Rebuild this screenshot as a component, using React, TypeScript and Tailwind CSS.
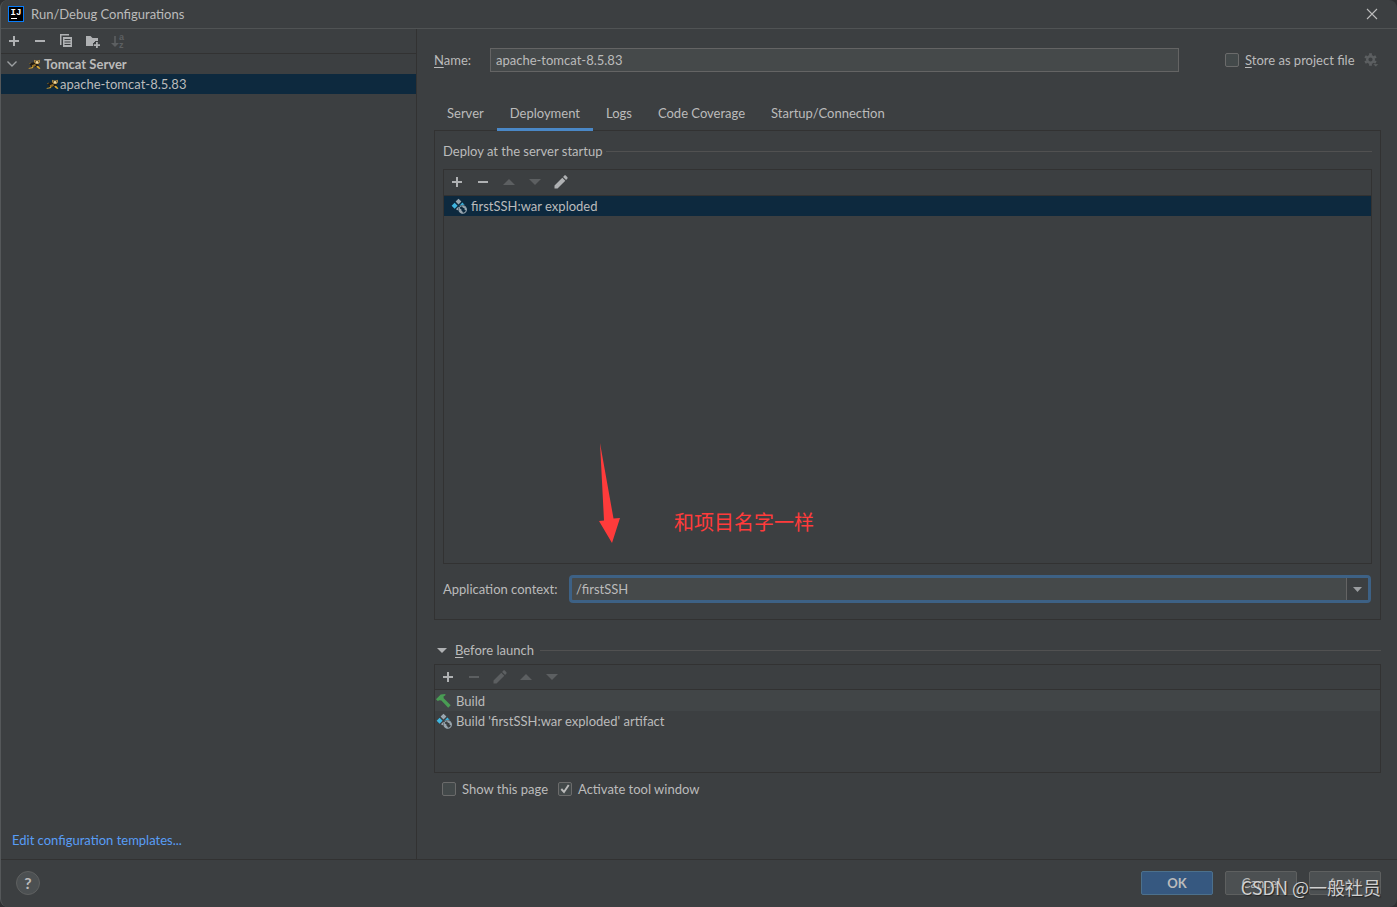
import React, { useState } from "react";

const iconBase = "size-4 shrink-0";

function PlusIcon() {
  return (
    <svg className={iconBase} viewBox="0 0 16 16" fill="currentColor">
      <path d="M3 7h4V3h2v4h4v2H9v4H7V9H3z" />
    </svg>
  );
}

function MinusIcon() {
  return (
    <svg className={iconBase} viewBox="0 0 16 16" fill="currentColor">
      <path d="M3 7h10v2H3z" />
    </svg>
  );
}

function CopyIcon() {
  return (
    <svg className={iconBase} viewBox="0 0 16 16" fill="currentColor">
      <path d="M2 1h9v1.5H3.5V12H2z" />
      <path fillRule="evenodd" d="M5 4h9v10H5zM6.5 6v1h6V6zM6.500 8.500v1h6v-1zM6.500 11v1h6v-1z" />
    </svg>
  );
}

function NewFolderIcon() {
  return (
    <svg className={iconBase} viewBox="0 0 16 16" fill="currentColor">
      <path d="M2 3h4.500l2 2H14v4h-4v3H9v1H2z" />
      <path d="M11 8h4v2h2v4h-2v2h-4v-2H9v-4h2z" fill="#3c3f41" />
      <path d="M12 9h1.800v2.200H16V13h-2.200v2H12v-2h-2.200v-1.800H12z" />
    </svg>
  );
}

function SortIcon() {
  return (
    <svg className={iconBase} viewBox="0 0 16 16" fill="currentColor">
      <path d="M4.200 3h1.600v7H9l-4 4-4-4h3.200z" />
      <text x="9" y="7" fontSize="9" fontFamily="Liberation Sans, sans-serif" fontWeight="700">a</text>
      <text x="9" y="14.500" fontSize="9" fontFamily="Liberation Sans, sans-serif" fontWeight="700">z</text>
    </svg>
  );
}

function UpIcon() {
  return (
    <svg className={iconBase} viewBox="0 0 16 16" fill="currentColor">
      <path d="M8 5l6 6H2z" />
    </svg>
  );
}

function DownIcon() {
  return (
    <svg className={iconBase} viewBox="0 0 16 16" fill="currentColor">
      <path d="M2 5h12l-6 6z" />
    </svg>
  );
}

function PencilIcon() {
  return (
    <svg className={iconBase} viewBox="0 0 16 16" fill="currentColor">
      <path d="M1.500 14.500V11.500L9.300 3.700l3 3L4.500 14.500zM10.100 2.900l1.300-1.300c.4-.4 1-.4 1.400 0l1.600 1.600c.4.4.4 1 0 1.400l-1.300 1.300z" />
    </svg>
  );
}

function TomcatIcon() {
  return (
    <svg className={iconBase} viewBox="-2 -1 18 18">
      <path d="M1.500 7.500l5-1.500L12.500 9 11.500 11.500 4.500 11.700 3 9.500z" fill="#1f1b15" />
      <path d="M4.500 9.500L8 8l1.500 1-1.500 1.700-3 .4z" fill="#94702a" />
      <path d="M1 12.400l3-.5 1.500-1.300 1.200.5-1.400 1.700-4.300.6zM9.500 10.600l2-.6 1.800 1.800 1 1.400-1.500.3-2.300-1.500z" fill="#d9a62f" />
      <path d="M7 3.300l1.500.7h3L13.500 3.200l.2 2.800-1.700 2H9L7.200 6z" fill="#bd9342" />
      <path d="M9 4.800h2.800l.6 1.500-1.900 1.400L9 6.500z" fill="#ecd9a8" />
      <path d="M8.400 5h.9v.9h-.9zM11.500 5h.9v.9h-.9z" fill="#2a2419" />
      <path d="M1.500 7.700l2-.8" stroke="#80652c" strokeWidth=".9" />
    </svg>
  );
}

function ArtifactIcon() {
  return (
    <svg className={iconBase} viewBox="0 0 16 16">
      <path d="M7.500.7l2.900 2.900-2.900 2.900-2.900-2.900z" fill="#9aa7b0" />
      <path d="M3.600 4.700l3 3-3 3-3-3z" fill="#40b6e0" />
      <path d="M11.400 4.600l2.300 2.300c-2-.4-3.700 0-5 1.200l-.3-.4z" fill="#40b6e0" />
      <path d="M7.400 8.700l.5.500c-.7 1-.9 2.200-.6 3.400L4.900 11.200z" fill="#9aa7b0" />
      <circle cx="11.700" cy="11.500" r="3.700" fill="none" stroke="#9aa7b0" strokeWidth="1.100" />
      <path d="M8.200 10l2.300 1.500v1.300l1.400 1.200-.3 1.300c-2.500 0-4.200-2.600-3.400-5.300zM11 8l.9 1.700 1.500.4.300 1.800 1.600.3c.5-2.400-1.500-4.900-4.300-4.200z" fill="#9aa7b0" />
    </svg>
  );
}

function HammerIcon() {
  return (
    <svg className={iconBase} viewBox="0 0 16 16" fill="#499c54">
      <path d="M0 6.300L4.700 1.500 9.400 1v1.300L7.500 3.500l.2 1.800 7 7-2.500 2.400-6.800-7.300-1.900-.2L1.700 8z" />
    </svg>
  );
}

function GearIcon() {
  return (
    <svg className="size-4 shrink-0 text-[#5c5f61]" viewBox="0 0 16 16">
      <g fill="none" stroke="currentColor">
        <circle cx="7.500" cy="7.500" r="3.300" strokeWidth="2.400" />
        <path d="M7.500 1.200v2.300M7.500 11.500v2.300M2.050 4.350l2 1.150M10.950 9.500l2 1.150M2.050 10.650l2-1.150M10.950 5.500l2-1.150" strokeWidth="2.800" />
      </g>
      <path d="M10 12h5.500l-2.700 2.700z" fill="currentColor" stroke="#3c3f41" strokeWidth=".3" />
    </svg>
  );
}

function AppLogo() {
  return (
    <svg className={iconBase} viewBox="0 0 16 16">
      <path d="M0 0h16v16H0z" fill="#087cfa" />
      <path d="M1 1h14v14H1z" fill="#000" />
      <text x="2.500" y="9" fontSize="9" fontWeight="700" fontFamily="Liberation Mono, monospace" fill="#fff">IJ</text>
      <path d="M3 12h6v1H3z" fill="#fff" />
    </svg>
  );
}

function ToolButton({ label, disabled, children }: { label: string; disabled?: boolean; children: React.ReactNode }) {
  return (
    <button
      type="button"
      aria-label={label}
      disabled={disabled}
      className="flex h-6 w-[26px] items-center justify-center text-[#afb1b3] disabled:text-[#5c5f61]"
    >
      {children}
    </button>
  );
}

function CheckBox({ id, label, checked }: { id: string; label: React.ReactNode; checked?: boolean }) {
  return (
    <div className="flex items-center gap-1.5">
      <span className="grid size-3.5 shrink-0">
        <input
          id={id}
          type="checkbox"
          defaultChecked={checked}
          className="peer col-start-1 row-start-1 size-3.5 appearance-none rounded-xs border border-[#6b6b6b] bg-[#43494a]"
        />
        <svg className="pointer-events-none invisible col-start-1 row-start-1 size-3.5 peer-checked:visible" viewBox="0 0 14 14">
          <path d="M3.300 7l2.700 3 4.700-7" fill="none" stroke="#bbb" strokeWidth="1.900" />
        </svg>
      </span>
      <label htmlFor={id}>{label}</label>
    </div>
  );
}

const tabs = ["Server", "Deployment", "Logs", "Code Coverage", "Startup/Connection"];

export default function App() {
  const [active, setActive] = useState("Deployment");
  return (
    <div className="bg-[#2f3032]">
      <div className="relative flex h-screen min-h-[600px] flex-col overflow-hidden rounded-lg border-l border-[#55585a] bg-[#3c3f41] font-['Lato','Noto_Sans_CJK_SC',sans-serif] text-[13px] leading-5 text-[#bbbbbb]">
        <header className="flex h-[29px] shrink-0 items-center gap-[7px] border-b border-[#505354] pr-[17px] pl-[7px]">
          <AppLogo />
          <h1>Run/Debug Configurations</h1>
          <button type="button" aria-label="Close" className="ml-auto">
            <svg className={iconBase} viewBox="0 0 16 16">
              <path d="M3 3l10 10M13 3L3 13" stroke="#bbb" strokeWidth="1.100" />
            </svg>
          </button>
        </header>

        <div className="flex min-h-0 flex-1">
          <aside className="flex w-[416px] shrink-0 flex-col border-r border-[#323232]">
            <div className="flex h-[25px] shrink-0 items-center border-b border-[#323232]">
              <ToolButton label="Add"><PlusIcon /></ToolButton>
              <ToolButton label="Remove"><MinusIcon /></ToolButton>
              <ToolButton label="Copy"><CopyIcon /></ToolButton>
              <ToolButton label="New folder"><NewFolderIcon /></ToolButton>
              <ToolButton label="Sort" disabled><SortIcon /></ToolButton>
            </div>
            <ul>
              <li className="flex h-5 items-center pl-[3px] font-bold">
                <svg className={iconBase} viewBox="0 0 16 16">
                  <path d="M3.500 5.500L8 10l4.500-4.500" fill="none" stroke="#9da0a2" strokeWidth="1.400" />
                </svg>
                <span className="flex items-center gap-0.5 pl-1.5">
                  <TomcatIcon />
                  Tomcat Server
                </span>
              </li>
              <li className="flex h-5 items-center bg-[#0d293e] pl-[43px]">
                <TomcatIcon />
                apache-tomcat-8.5.83
              </li>
            </ul>
            <a href="#templates" className="mt-auto mb-[9px] self-start pl-[11px] text-[#589df6]">
              Edit configuration templates...
            </a>
          </aside>

          <main className="flex min-w-0 flex-1 flex-col pr-4 pb-[60px] pl-[17px]">
            <div className="mt-[19px] flex items-center">
              <label htmlFor="name" className="w-14">
                <span className="underline underline-offset-2">N</span>ame:
              </label>
              <input
                id="name"
                defaultValue="apache-tomcat-8.5.83"
                className="h-6 min-w-0 flex-1 border border-[#646464] bg-[#45494a] px-[5px] outline-none"
              />
              <div className="ml-[46px] flex w-[156px] items-center justify-between pr-0.5">
                <CheckBox
                  id="store"
                  label={<><span className="underline underline-offset-2">S</span>tore as project file</>}
                />
                <button type="button" aria-label="Store settings"><GearIcon /></button>
              </div>
            </div>

            <nav className="mt-6 flex h-[34px] shrink-0" role="tablist">
              {tabs.map((tab) => (
                <button
                  key={tab}
                  type="button"
                  role="tab"
                  aria-selected={tab === active}
                  onClick={() => setActive(tab)}
                  className="relative z-10 -mb-px border-b-3 border-transparent px-[13px] pt-0.5 aria-selected:border-[#4a88c7]"
                >
                  {tab}
                </button>
              ))}
            </nav>

            <section className="flex min-h-0 flex-1 flex-col border border-[#323232] px-2 pb-4">
              <div className="mt-2.5 flex items-center gap-1">
                <h2>Deploy at the server startup</h2>
                <span className="h-px flex-1 bg-[#515151]" />
              </div>
              <div className="mt-2 flex min-h-0 flex-1 flex-col border border-[#323232]">
                <div className="flex h-[26px] shrink-0 items-start border-b border-[#323232]">
                  <ToolButton label="Add artifact"><PlusIcon /></ToolButton>
                  <ToolButton label="Remove artifact"><MinusIcon /></ToolButton>
                  <ToolButton label="Move up" disabled><UpIcon /></ToolButton>
                  <ToolButton label="Move down" disabled><DownIcon /></ToolButton>
                  <ToolButton label="Edit artifact"><PencilIcon /></ToolButton>
                </div>
                <div className="relative flex-1">
                  <div className="flex h-5 items-center gap-1 bg-[#0d293e] pl-[7px]">
                    <ArtifactIcon />
                    firstSSH:war exploded
                  </div>
                  <svg className="absolute top-[247px] left-[155px] h-[101px] w-[22px]" viewBox="0 0 22 101" fill="#ff3b3b">
                    <path d="M1 0L14.500 75.500L21 75L13 100L0 78L5 77.500z" />
                  </svg>
                  <p className="absolute top-[311px] left-[230px] text-xl leading-[30px] whitespace-nowrap text-[#ff3b3b]">
                    和项目名字一样
                  </p>
                </div>
              </div>
              <div className="mt-[11px] flex items-center">
                <label htmlFor="context" className="w-[126px] shrink-0">Application context:</label>
                <div className="mr-px flex h-7 min-w-0 flex-1 rounded-sm border-3 border-[#3d6185] bg-[#45494a]">
                  <input id="context" defaultValue="/firstSSH" className="min-w-0 flex-1 px-1 outline-none" />
                  <button
                    type="button"
                    aria-label="Show contexts"
                    className="flex w-[22px] items-center justify-center border-l border-[#646464] bg-[#3c3f41]"
                  >
                    <svg className="h-[5px] w-[9px]" viewBox="0 0 9 5" fill="#9a9da0"><path d="M0 0h9L4.500 5z" /></svg>
                  </button>
                </div>
              </div>
            </section>

            <section className="mt-5">
              <div className="flex items-center">
                <button type="button" className="flex items-center gap-2 pl-[3px]">
                  <svg className="h-[5px] w-[10px]" viewBox="0 0 10 5" fill="#afb1b3"><path d="M0 0h10L5 5z" /></svg>
                  <span><span className="underline underline-offset-2">B</span>efore launch</span>
                </button>
                <span className="ml-1.5 h-px flex-1 bg-[#515151]" />
              </div>
              <div className="mt-1 h-[109px] border border-[#323232]">
                <div className="flex h-[25px] items-center border-b border-[#323232]">
                  <ToolButton label="Add task"><PlusIcon /></ToolButton>
                  <ToolButton label="Remove task" disabled><MinusIcon /></ToolButton>
                  <ToolButton label="Edit task" disabled><PencilIcon /></ToolButton>
                  <ToolButton label="Move task up" disabled><UpIcon /></ToolButton>
                  <ToolButton label="Move task down" disabled><DownIcon /></ToolButton>
                </div>
                <ul>
                  <li className="flex h-[21px] items-center gap-1 bg-[#414547] pl-px"><HammerIcon />Build</li>
                  <li className="flex h-5 items-center gap-1 pl-px"><ArtifactIcon />Build 'firstSSH:war exploded' artifact</li>
                </ul>
              </div>
              <div className="mt-1.5 flex gap-2.5 pl-2">
                <CheckBox id="show-page" label="Show this page" />
                <CheckBox id="activate" label="Activate tool window" checked />
              </div>
            </section>
          </main>
        </div>

        <footer className="flex h-12 shrink-0 items-center gap-3 border-t border-[#323232] pr-4 pb-px pl-[15px]">
          <button type="button" className="mr-auto size-6 rounded-full border border-[#5e6060] bg-[#4c5052] text-base leading-5 font-bold">?</button>
          <button type="button" className="h-6 w-[72px] rounded-xs border border-[#4c708c] bg-[#365880] font-bold">OK</button>
          <button type="button" className="h-6 w-[72px] rounded-xs border border-[#5e6060] bg-[#4c5052]">Cancel</button>
          <button type="button" className="h-6 w-[72px] rounded-xs border border-[#5e6060] bg-[#4c5052] text-[#8c8c8c]">Apply</button>
        </footer>
        <p className="pointer-events-none absolute right-4 bottom-2 font-['Noto_Sans_CJK_SC',sans-serif] text-lg leading-6 whitespace-nowrap text-[#d0d0d0] [text-shadow:1px_1px_1px_#222]">
          CSDN @一般社员
        </p>
      </div>
    </div>
  );
}
